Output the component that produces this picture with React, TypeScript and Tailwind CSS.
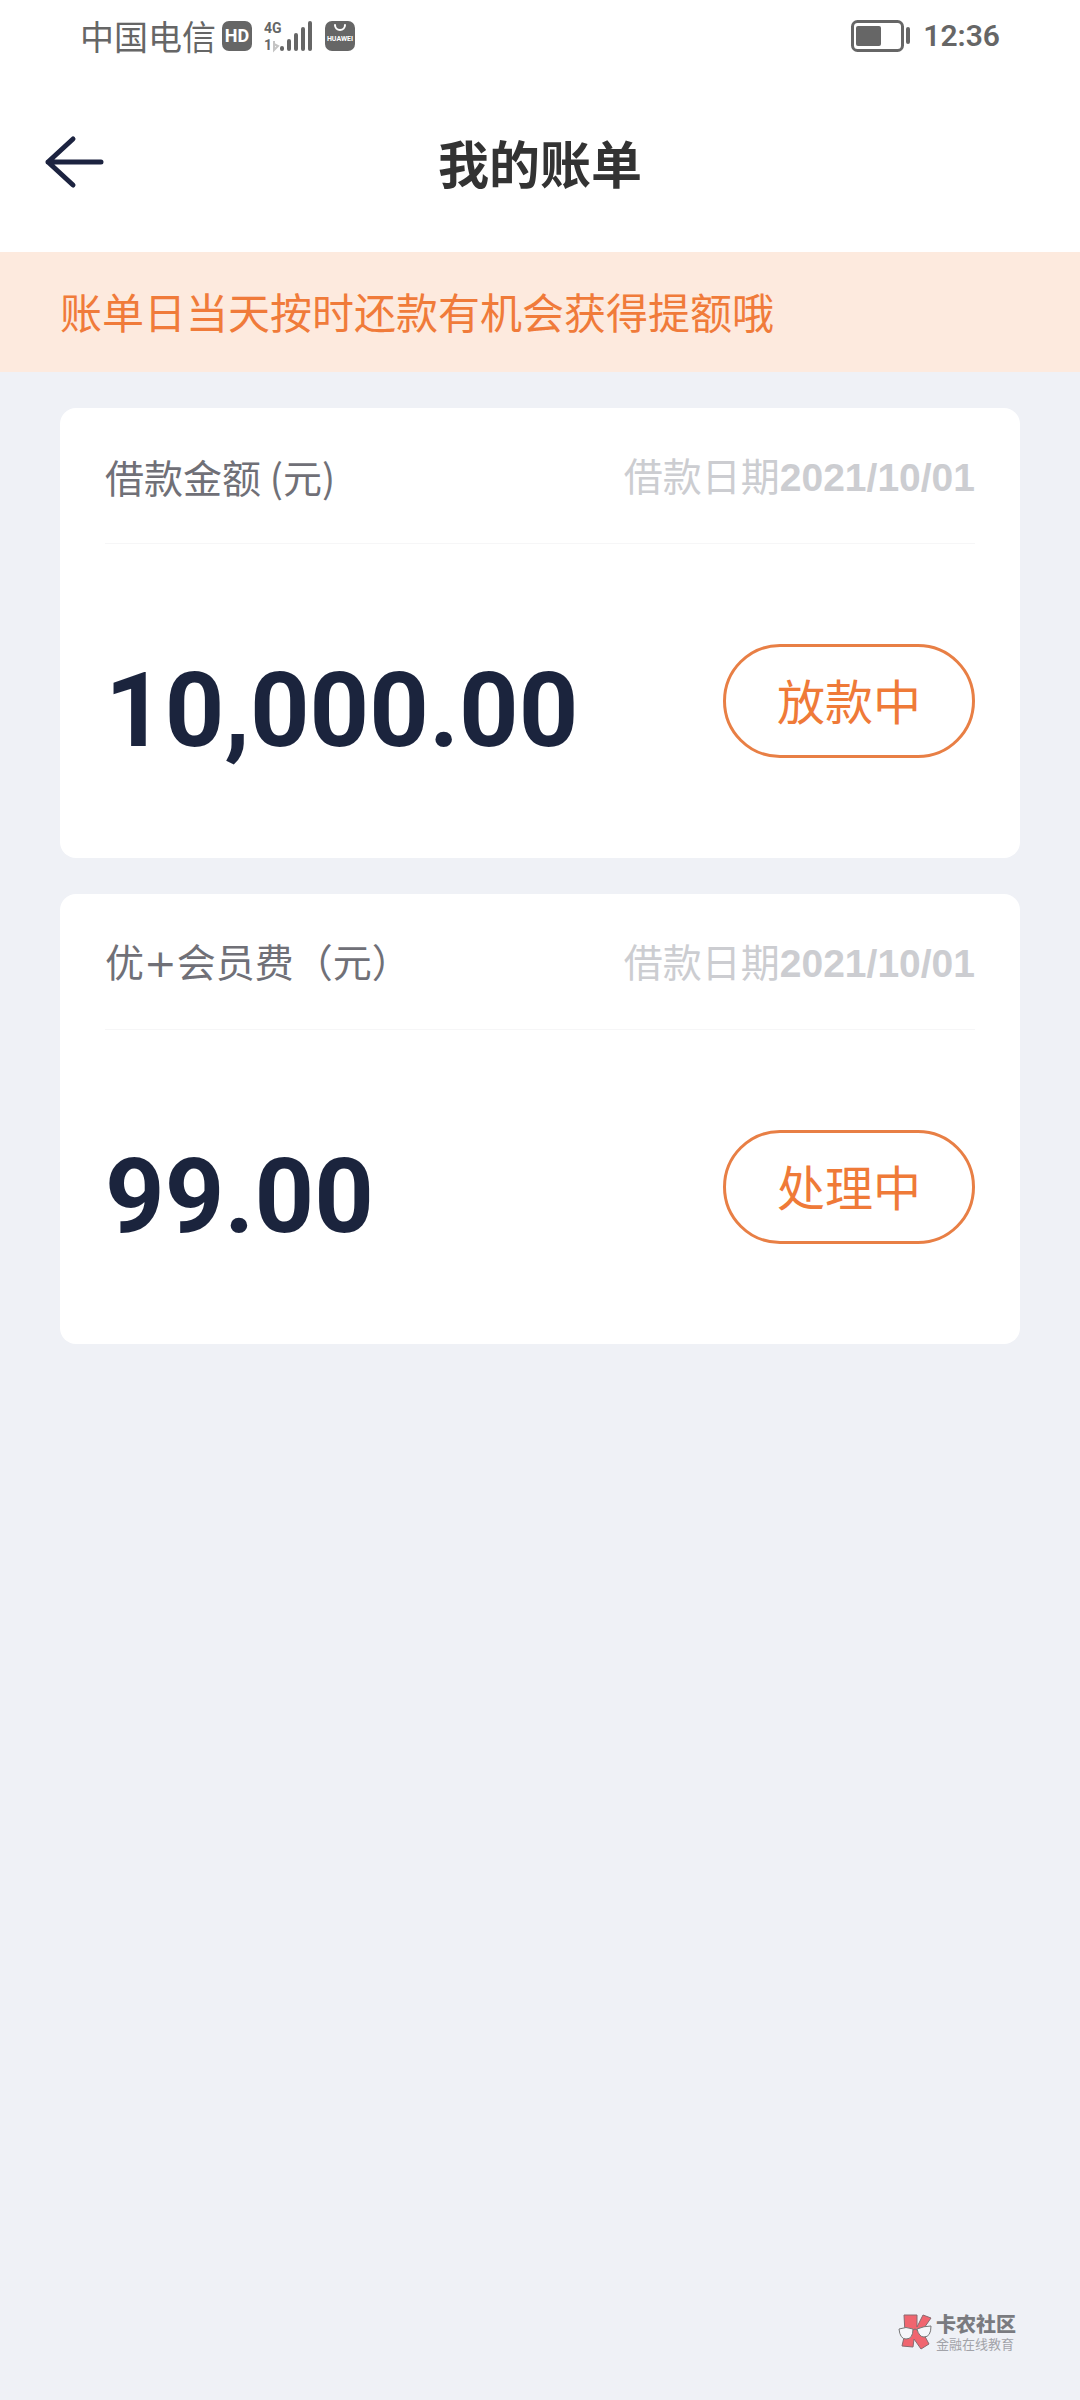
interface Bill { id: number; name: React.ReactNode; date: string; amount: string; status: string }

const bills: Bill[] = [
  { id: 1, name: "借款金额 (元)", date: "2021/10/01", amount: "10,000.00", status: "放款中" },
  {
    id: 2,
    name: <>优<span className="font-['DejaVu_Sans',sans-serif]">+</span>会员费（元）</>,
    date: "2021/10/01",
    amount: "99.00",
    status: "处理中",
  },
];

function SignalIcon() {
  return (
    <svg width="49" height="36" viewBox="0 -2 49 36" fill="#666" aria-hidden="true">
      <text x="0" y="13" fontSize="14" fontWeight="700" fontFamily="Roboto, sans-serif">4G</text>
      <text x="0" y="30" fontSize="14" fontWeight="700" fontFamily="Roboto, sans-serif">1</text>
      <path d="M10 21v9l4-4-4-2" fill="none" stroke="#c4c4c4" strokeWidth="2" />
      <rect x="16" y="26" width="4" height="5" rx="2" />
      <rect x="23" y="19" width="4" height="12" rx="2" />
      <rect x="30" y="13" width="4" height="18" rx="2" />
      <rect x="37" y="7" width="4" height="24" rx="2" />
      <rect x="44" y="1" width="4" height="30" rx="2" />
    </svg>
  );
}

function HuaweiIcon() {
  return (
    <svg width="30" height="30" viewBox="0 0 30 30" aria-hidden="true">
      <rect width="30" height="30" rx="7" fill="#666" />
      <path d="M10 4a5 5 0 0 0 10 0" fill="none" stroke="#fff" strokeWidth="2" strokeLinecap="round" />
      <text x="15" y="20" fontSize="7" fontWeight="700" fill="#fff" textAnchor="middle" fontFamily="Roboto, sans-serif">HUAWEI</text>
    </svg>
  );
}

function BatteryIcon() {
  return (
    <svg width="60" height="32" viewBox="0 0 60 32" fill="#666" aria-hidden="true">
      <rect x="1.5" y="1.5" width="50" height="29" rx="5" fill="none" stroke="#666" strokeWidth="3" />
      <rect x="5" y="6" width="25" height="20" rx="2" />
      <rect x="55" y="7" width="4" height="17" rx="2" />
    </svg>
  );
}

function StatusBar() {
  return (
    <div className="flex h-18 items-center justify-between px-20 text-[#666]">
      <div className="flex items-center">
        <span className="text-[34px] leading-10">中国电信</span>
        <span className="ml-1.5 flex h-[30px] w-[30px] items-center justify-center rounded-[7px] bg-[#666] font-['Roboto',sans-serif] text-lg font-bold text-white">HD</span>
        <span className="ml-3"><SignalIcon /></span>
        <span className="ml-3"><HuaweiIcon /></span>
      </div>
      <div className="flex items-center gap-3">
        <BatteryIcon />
        <time className="font-['Roboto',sans-serif] text-3xl font-semibold">12:36</time>
      </div>
    </div>
  );
}

function BillCard({ bill }: { bill: Bill }) {
  return (
    <article className="rounded-2xl bg-white px-[45px]">
      <div className="flex h-34 items-center justify-between border-b border-[#f6f6f7] text-[39px] leading-12">
        <h2 className="text-[#707077]">{bill.name}</h2>
        <p className="text-[#cccdd1]">
          借款日期<time className="font-['Liberation_Sans',sans-serif] font-bold">{bill.date}</time>
        </p>
      </div>
      <div className="flex h-[314px] items-center justify-between">
        <strong className="pt-5 font-['Roboto',sans-serif] text-[104px] leading-30 font-bold text-[#1b243d]">{bill.amount}</strong>
        <button type="button" className="h-[114px] w-[252px] rounded-full border-3 border-[#e87f45] pb-1 text-5xl text-[#ef7a38]">{bill.status}</button>
      </div>
    </article>
  );
}

function Watermark() {
  return (
    <footer className="mt-auto flex items-center justify-end gap-1 pr-16 pb-12">
      <svg width="34" height="36" viewBox="0 0 34 36" aria-hidden="true">
        <path d="M6 1h13v12l6-12 8 3-9 13 7 13-8 5-7-10-1 8-11-1 3-13z" fill="#f0656f" stroke="#8a6a70" strokeWidth="1" />
        <path d="M1 15q7-3 14 0 0 10-7 10-6 0-7-10zM19 15q7-3 14-3 0 11-7 11-5 0-7-8z" fill="#f5f6fa" stroke="#777" strokeWidth="1" />
        <path d="M15 16q2-2 4 0" fill="none" stroke="#777" />
      </svg>
      <div>
        <p className="text-xl leading-6 font-black text-[#7a7b80]">卡农社区</p>
        <p className="text-[13px] leading-4 text-[#a2a3a9]">金融在线教育</p>
      </div>
    </footer>
  );
}

export default function App() {
  return (
    <div className="flex min-h-screen flex-col bg-[#eff1f6] font-['Noto_Sans_CJK_SC',sans-serif]">
      <header className="bg-white">
        <StatusBar />
        <div className="grid h-45 grid-cols-[1fr_auto_1fr] items-center px-11">
          <button type="button" aria-label="返回" className="w-fit">
            <svg width="62" height="54" viewBox="0 0 62 54" fill="none" stroke="#1c2340" strokeWidth="5" strokeLinecap="round" strokeLinejoin="round" aria-hidden="true">
              <path d="M57 27H4M29 4 4 27l25 23" />
            </svg>
          </button>
          <h1 className="text-[51px] leading-15 font-bold text-[#333]">我的账单</h1>
        </div>
      </header>
      <p className="flex h-30 items-center bg-[#fdeade] px-15 pb-0.5 text-[42px] leading-15 text-[#f07b3a]">账单日当天按时还款有机会获得提额哦</p>
      <main className="flex flex-col gap-9 px-15 pt-9">
        {bills.map((b) => <BillCard key={b.id} bill={b} />)}
      </main>
      <Watermark />
    </div>
  );
}
